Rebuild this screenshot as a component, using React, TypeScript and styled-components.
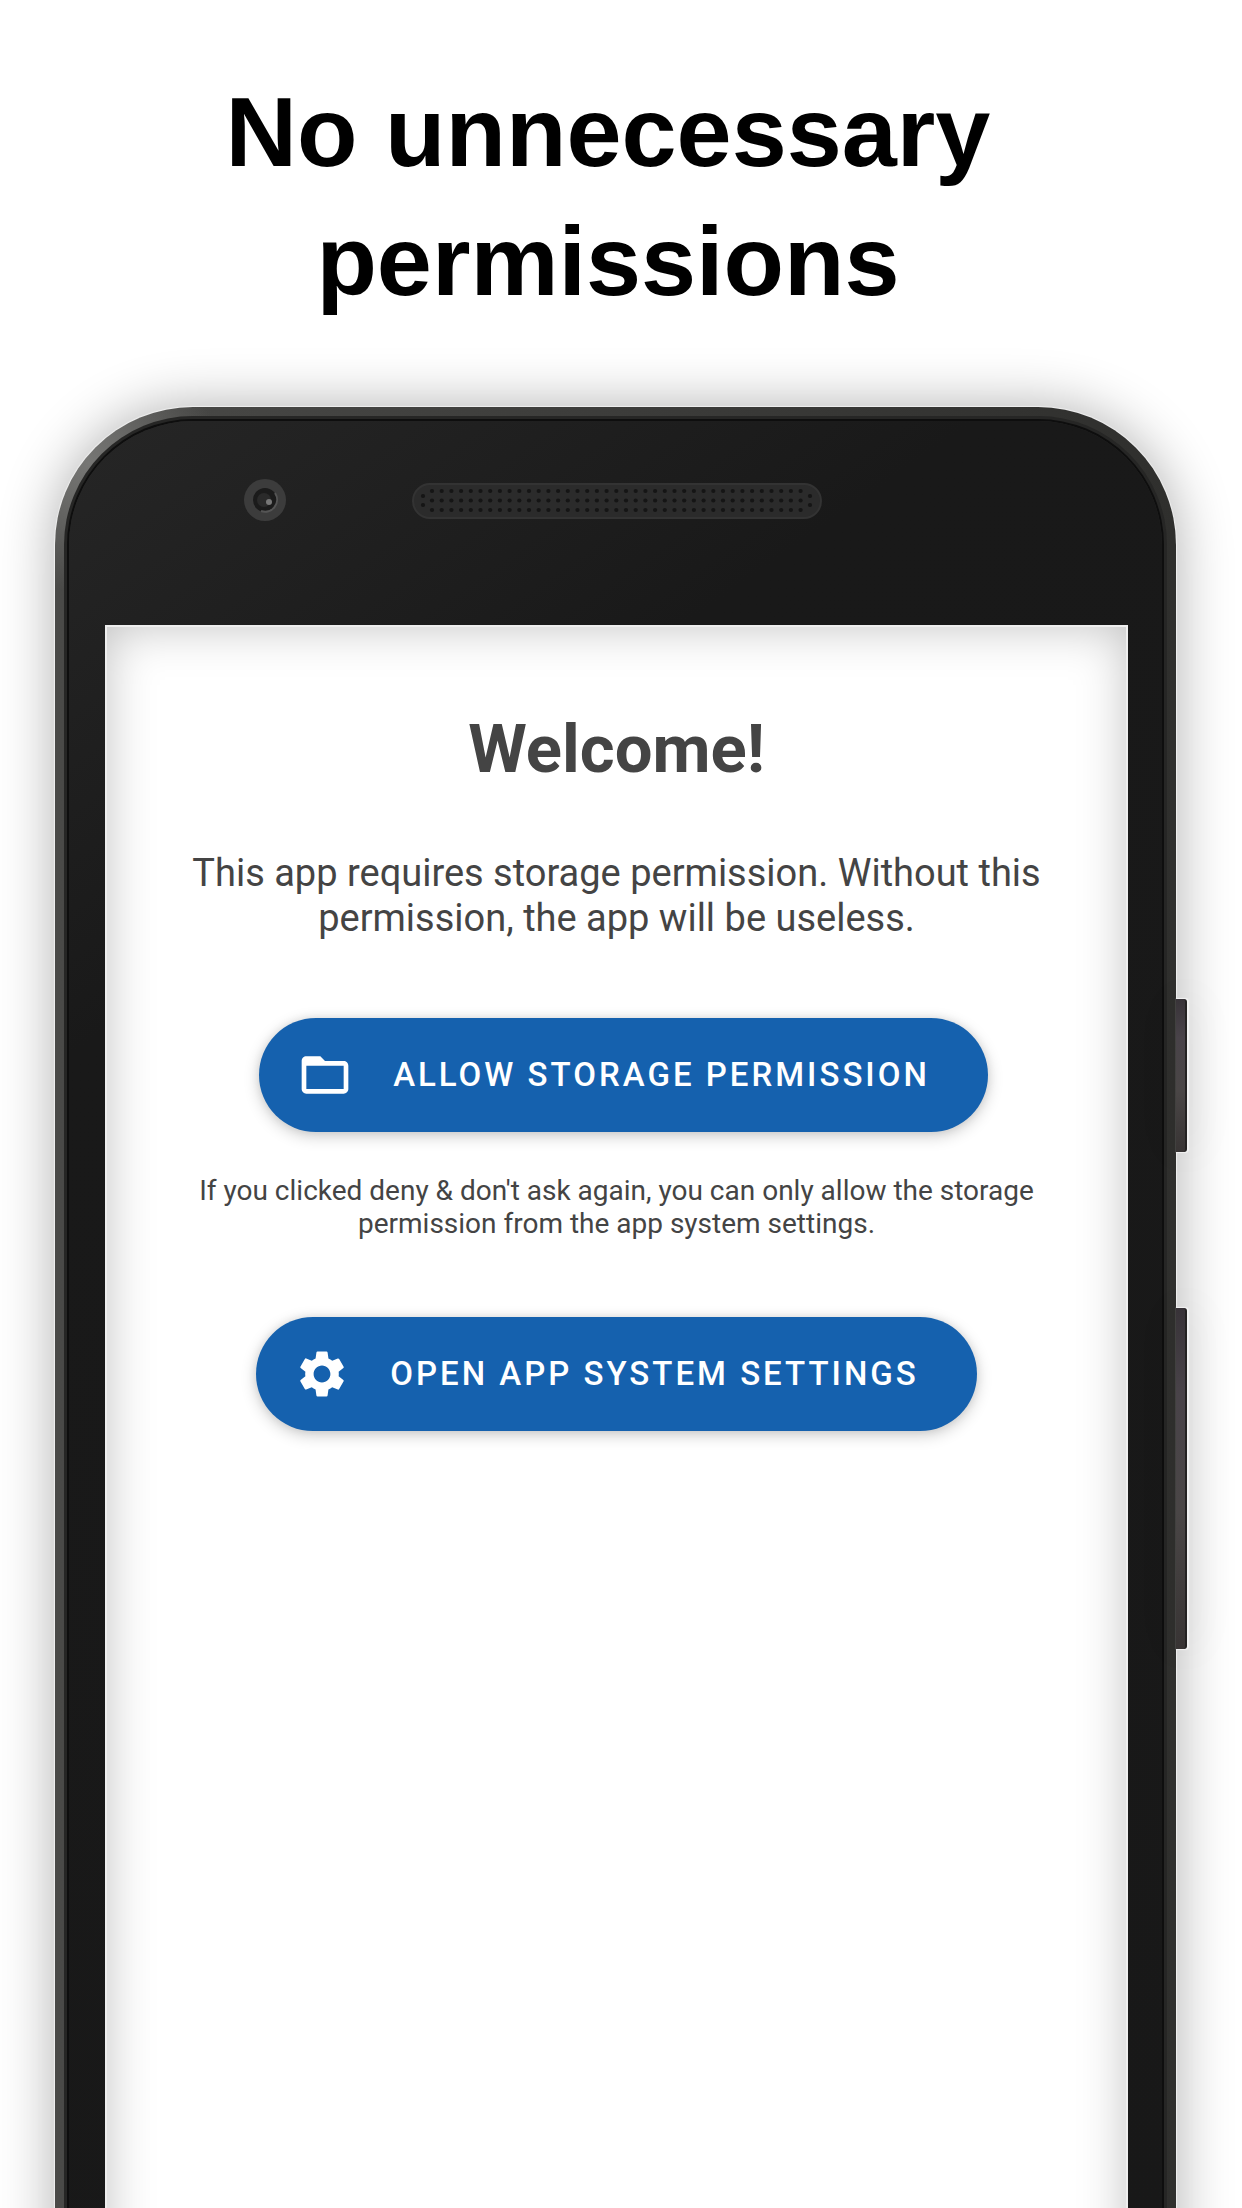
import React from "react";
import styled, { createGlobalStyle, css } from "styled-components";

const GlobalStyle = createGlobalStyle`
  *, *::before, *::after { box-sizing: border-box; }
  html, body { margin: 0; background: #ffffff; }
  h1, h2, p { margin: 0; }
`;

const Page = styled.main`
  display: flex;
  flex-direction: column;
  min-height: 100vh;
  overflow: hidden;
  background: #ffffff;
`;

const Headline = styled.h1`
  padding: 67px 200px 82px 174px;
  font-family: "Liberation Sans", Arial, sans-serif;
  font-size: 99px;
  font-weight: 700;
  line-height: 129px;
  text-align: center;
  color: #000000;
`;

/* The device runs past the bottom edge of the page. */
const Device = styled.section`
  display: flex;
  flex: 1;
  margin-bottom: -80px;
  padding: 0 55px;
`;

const Frame = styled.div`
  display: flex;
  flex: 1;
  padding: 9px 9px 0;
  border-radius: 138px 138px 0 0;
  background:
    radial-gradient(circle at 34px 56px, #767674 0, #6a6a68 40px, rgba(74, 74, 72, 0) 130px),
    linear-gradient(to right, #4a4a48, #2f2f2d);
  box-shadow: 0 0 1px 1px #f0f0f0, 0 0 56px rgba(0, 0, 0, 0.32);
`;

const Rim = styled.div`
  display: flex;
  flex: 1;
  padding: 5px 5px 0;
  border-radius: 129px 129px 0 0;
  background: #262625;
`;

const Glass = styled.div`
  display: flex;
  flex: 1;
  flex-direction: column;
  padding: 0 34px 0 36px;
  border-radius: 124px 124px 0 0;
  background: linear-gradient(145deg, #262626 0, #191919 520px, #181818 100%);
  box-shadow: 0 0 0 2px #0e0e0e;
`;

const TopBezel = styled.div`
  display: grid;
  grid-template-columns: 1fr 410px 1fr;
  align-items: start;
  height: 204px;
  padding-top: 58px;
`;

const CameraLens = styled.svg`
  width: 42px;
  height: 42px;
  margin-left: 139px;
`;

const SpeakerGrille = styled.svg`
  width: 410px;
  height: 36px;
  margin-top: 4px;
`;

const Screen = styled.div`
  display: flex;
  flex: 1;
  flex-direction: column;
  align-items: center;
  padding: 86px 80px 0;
  background: #ffffff;
  box-shadow: inset 0 0 0 2px #eeeeee, inset 0 0 50px rgba(0, 0, 0, 0.26);
  font-family: Roboto, sans-serif;
  color: #444444;
  text-align: center;
`;

const Title = styled.h2`
  font-size: 67px;
  font-weight: 700;
  line-height: 76px;
`;

const Message = styled.p<{ $small?: boolean }>`
  ${({ $small }) =>
    $small
      ? css`
          margin: 42px 0 77px;
          font-size: 28px;
          line-height: 33px;
        `
      : css`
          margin: 64px 0 77px;
          font-size: 38px;
          line-height: 45px;
        `}
`;

const PillButton = styled.button<{ $indent?: boolean }>`
  display: flex;
  align-items: center;
  gap: 40px;
  height: 114px;
  margin: 0 0 0 ${({ $indent }) => ($indent ? "14px" : "0")};
  padding: 0 58px 0 38px;
  border: 0;
  border-radius: 57px;
  background: #1561ae;
  box-shadow: 0 4px 16px rgba(0, 0, 0, 0.2), 0 0 8px rgba(0, 0, 0, 0.08);
  color: #ffffff;
  font-family: Roboto, sans-serif;
  font-size: 33px;
  font-weight: 500;
  line-height: 40px;
  letter-spacing: 3px;
  text-transform: uppercase;
  white-space: nowrap;
  cursor: pointer;
`;

const ButtonIcon = styled.svg`
  width: 56px;
  height: 56px;
  fill: currentColor;
`;

const SideKeys = styled.div`
  display: flex;
  flex-direction: column;
  gap: 156px;
  width: 11px;
  padding-top: 592px;
`;

const SideKey = styled.div<{ $length: number }>`
  height: ${({ $length }) => $length}px;
  border-right: 2px solid #242222;
  border-radius: 0 3px 3px 0;
  background: linear-gradient(#383338, #494349 25%, #4a4646 60%, #383434);
  box-shadow: 1px 0 1px 1px #f2f2f2, 4px 0 44px rgba(0, 0, 0, 0.1);
`;

const columns = Array.from({ length: 39 }, (_, i) => i);

function Camera() {
  return (
    <CameraLens viewBox="0 0 42 42" aria-hidden="true">
      <circle cx="21" cy="21" r="21" fill="#3c3c3c" />
      <circle cx="21" cy="21" r="12" fill="#1b1b1b" />
      <path d="M31 14a12 12 0 0 1-14 18" fill="none" stroke="#555" strokeWidth="2" />
      <circle cx="20" cy="21" r="7" fill="#2a2a2a" />
      <circle cx="25" cy="23" r="3" fill="#777" />
    </CameraLens>
  );
}

function Speaker() {
  return (
    <SpeakerGrille viewBox="0 0 410 36" aria-hidden="true">
      <rect x="1" y="1" width="408" height="34" rx="17" fill="#2b2b2b" stroke="#333333" strokeWidth="2" />
      {columns.map((i) => (
        <g key={i} fill="#151515">
          <circle cx={20 + i * 9.7} cy="8" r="2.1" />
          <circle cx={20 + i * 9.7} cy="17.5" r="2.1" />
          <circle cx={20 + i * 9.7} cy="27" r="2.1" />
        </g>
      ))}
      <g fill="#151515">
        <circle cx="11" cy="13" r="2.1" />
        <circle cx="11" cy="22" r="2.1" />
        <circle cx="398" cy="13" r="2.1" />
        <circle cx="398" cy="22" r="2.1" />
      </g>
    </SpeakerGrille>
  );
}

function FolderIcon() {
  return (
    <ButtonIcon viewBox="0 0 24 24" aria-hidden="true">
      <path d="M20 6h-8l-2-2H4c-1.1 0-2 .9-2 2v12c0 1.100.9 2 2 2h16c1.100 0 2-.9 2-2V8c0-1.100-.9-2-2-2zm0 12H4V8h16v10z" />
    </ButtonIcon>
  );
}

function GearIcon() {
  return (
    <ButtonIcon viewBox="0 0 24 24" aria-hidden="true">
      <path d="M19.140 12.940c.04-.3.060-.61.060-.94 0-.32-.02-.64-.07-.94l2.030-1.580c.18-.14.230-.41.120-.61l-1.920-3.320c-.12-.22-.37-.29-.59-.22l-2.390.96c-.5-.38-1.030-.7-1.620-.94l-.36-2.540c-.04-.24-.24-.41-.48-.41h-3.840c-.24 0-.43.170-.47.410l-.36 2.540c-.59.240-1.130.570-1.620.940l-2.390-.96c-.22-.08-.47 0-.59.220L2.740 8.870c-.12.210-.08.470.120.610l2.030 1.580c-.05.3-.09.630-.09.940s.02.640.070.940l-2.030 1.580c-.18.140-.23.410-.12.610l1.920 3.320c.12.220.370.290.590.220l2.390-.96c.5.380 1.030.7 1.620.940l.36 2.540c.05.240.240.410.480.410h3.840c.24 0 .44-.17.470-.41l.36-2.540c.59-.24 1.130-.56 1.620-.94l2.390.96c.22.080.470 0 .59-.22l1.920-3.320c.12-.22.070-.47-.12-.61l-2.010-1.580zM12 15.600c-1.980 0-3.600-1.620-3.600-3.600s1.620-3.600 3.600-3.600 3.600 1.620 3.600 3.600-1.620 3.600-3.600 3.600z" />
    </ButtonIcon>
  );
}

export default function App() {
  return (
    <>
      <GlobalStyle />
      <Page>
        <Headline>No unnecessary permissions</Headline>
        <Device>
          <Frame>
            <Rim>
              <Glass>
                <TopBezel>
                  <Camera />
                  <Speaker />
                </TopBezel>
                <Screen>
                  <Title>Welcome!</Title>
                  <Message>
                    This app requires storage permission. Without this permission, the app will be useless.
                  </Message>
                  <PillButton type="button" $indent>
                    <FolderIcon />
                    Allow storage permission
                  </PillButton>
                  <Message $small>
                    If you clicked deny &amp; don't ask again, you can only allow the storage permission from the app
                    system settings.
                  </Message>
                  <PillButton type="button">
                    <GearIcon />
                    Open app system settings
                  </PillButton>
                </Screen>
              </Glass>
            </Rim>
          </Frame>
          <SideKeys>
            <SideKey $length={153} />
            <SideKey $length={341} />
          </SideKeys>
        </Device>
      </Page>
    </>
  );
}
